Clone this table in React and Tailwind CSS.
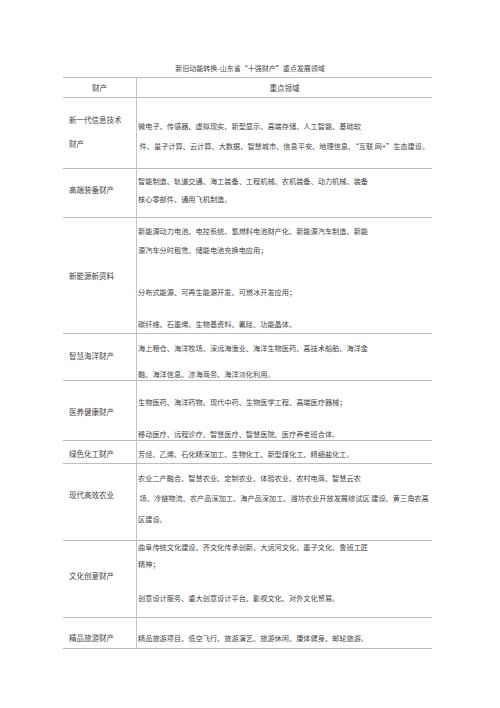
import React from 'react';

const rows = [
  {
    h: 'h-[71px]',
    left: { pt: 'pt-[17px]', lines: [['新一代信息技术', ''], ['财产', 'mt-[14px]']] },
    right: {
      pt: 'pt-[23px]',
      lines: [
        ['微电子、传感器、虚拟现实、新型显示、高端存储、人工智能、基础软', ''],
        [' 件、量子计算、云计算、大数据、智慧城市、信息平安、地理信息、“互联 网+”生态建设。', 'mt-[10px]'],
      ],
    },
  },
  {
    h: 'h-[49px]',
    left: { pt: 'pt-[16px]', lines: [['高端装备财产', '']] },
    right: {
      pt: 'pt-[7px]',
      lines: [
        ['智能制造、轨道交通、海工装备、工程机械、农机装备、动力机械、装备', ''],
        ['核心零部件、通用飞机制造。', 'mt-[8px]'],
      ],
    },
  },
  {
    h: 'h-[116px]',
    left: { pt: 'pt-[53px]', lines: [['新能源新资料', '']] },
    right: {
      pt: 'pt-[8px]',
      lines: [
        ['新能源动力电池、电控系统、氢燃料电池财产化、新能源汽车制造、新能', ''],
        ['源汽车分时租赁、储能电池充换电应用；', 'mt-[9px]'],
        ['分布式能源、可再生能源开发、可燃冰开发应用；', 'mt-[32px]'],
        ['碳纤维、石墨烯、生物基资料、氟硅、功能晶体。', 'mt-[22px]'],
      ],
    },
  },
  {
    h: 'h-[47px]',
    left: { pt: 'pt-[17px]', lines: [['智慧海洋财产', '']] },
    right: {
      pt: 'pt-[9px]',
      lines: [
        ['海上粮仓、海洋牧场、深远海渔业、海洋生物医药、高技术船舶、海洋金', ''],
        ['融、海洋信息、涉海商务、海洋淡化利用。', 'mt-[16px]'],
      ],
    },
  },
  {
    h: 'h-[60px]',
    left: { pt: 'pt-[26px]', lines: [['医养健康财产', '']] },
    right: {
      pt: 'pt-[16px]',
      lines: [
        ['生物医药、海洋药物、现代中药、生物医学工程、高端医疗器械；', ''],
        ['移动医疗、远程诊疗、智慧医疗、智慧医院、医疗养老班合体。', 'mt-[22px]'],
      ],
    },
  },
  {
    h: 'h-[23px]',
    left: { pt: 'pt-[8px]', lines: [['绿色化工财产', '']] },
    right: {
      pt: 'pt-[8px]',
      lines: [['芳烃、乙烯、石化精深加工、生物化工、新型煤化工、精细盐化工。', '']],
    },
  },
  {
    h: 'h-[77px]',
    left: { pt: 'pt-[26px]', lines: [['现代高效农业', '']] },
    right: {
      pt: 'pt-[9px]',
      lines: [
        ['农业二产融合、智慧农业、定制农业、体验农业、农村电商、智慧云农', ''],
        [' 场、冷链物流、农产品深加工、海产品深加工、潍坊农业开放发展综试区 建设、黄三角农高', 'mt-[10px]'],
        ['区建设。', 'mt-[11px]'],
      ],
    },
  },
  {
    h: 'h-[77px]',
    left: { pt: 'pt-[30px]', lines: [['文化创意财产', '']] },
    right: {
      pt: 'pt-[1px]',
      lines: [
        ['曲阜传统文化建设、齐文化传承创新、大运河文化、墨子文化、鲁班工匠', ''],
        ['精神；', 'mt-[7px]'],
        ['创意设计服务、重大创意设计平台、影视文化、对外文化贸易。', 'mt-[24px]'],
      ],
    },
  },
  {
    h: 'h-[31px]',
    left: { pt: 'pt-[15px]', lines: [['精品旅游财产', '']] },
    right: {
      pt: 'pt-[15px]',
      lines: [['精品旅游项目、低空飞行、旅游演艺、旅游休闲、康体健身、邮轮旅游。', '']],
    },
  },
];

export default function App() {
  return (
    <div
      className="w-[500px] h-[708px] bg-white pt-[63px] text-[#444]"
      style={{ fontFamily: '"Noto Sans CJK SC", "Liberation Serif", serif' }}
    >
      {/* Title */}
      <div className="h-[10px] leading-[10px] text-[7px] text-center whitespace-nowrap">
        新旧动能转换-山东省“十强财产”重点发展领域
      </div>

      {/* Table */}
      <div className="mt-[4px] ml-[63px] w-[369px] border-t border-[#bdbdbd]">
        <div className="flex h-[20px] border-b border-[#bdbdbd] text-[7.5px] leading-[10px]">
          <div className="w-[74px] shrink-0 border-r border-[#c4c4c4] flex items-center justify-center">
            财产
          </div>
          <div className="flex-1 flex items-center justify-center">重点领域</div>
        </div>

        {rows.map((row, i) => (
          <div key={i} className={`flex ${row.h} border-b border-[#bdbdbd]`}>
            <div className={`w-[74px] shrink-0 border-r border-[#c4c4c4] pl-[6px] ${row.left.pt} text-[7.5px] leading-[10px]`}>
              {row.left.lines.map(([t, cls], j) => (
                <div key={j} className={`whitespace-nowrap ${cls}`}>{t}</div>
              ))}
            </div>
            <div className={`flex-1 pl-[1px] ${row.right.pt} text-[7.2px] leading-[10px]`}>
              {row.right.lines.map(([t, cls], j) => (
                <div key={j} className={`whitespace-pre ${cls}`}>{t}</div>
              ))}
            </div>
          </div>
        ))}
      </div>
    </div>
  );
}
